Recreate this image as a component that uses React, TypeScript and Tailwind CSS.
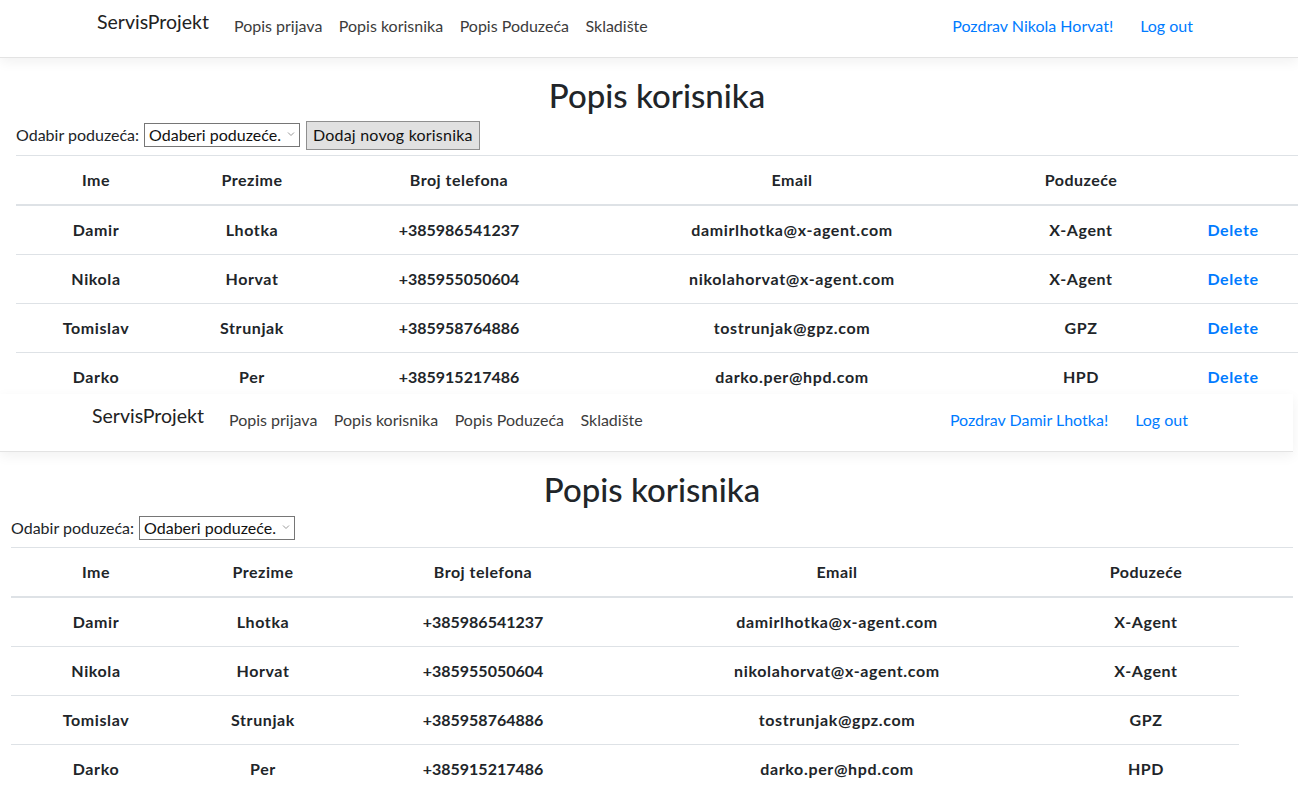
const users = [
  { ime: "Damir", prezime: "Lhotka", tel: "+385986541237", email: "damirlhotka@x-agent.com", firma: "X-Agent" },
  { ime: "Nikola", prezime: "Horvat", tel: "+385955050604", email: "nikolahorvat@x-agent.com", firma: "X-Agent" },
  { ime: "Tomislav", prezime: "Strunjak", tel: "+385958764886", email: "tostrunjak@gpz.com", firma: "GPZ" },
  { ime: "Darko", prezime: "Per", tel: "+385915217486", email: "darko.per@hpd.com", firma: "HPD" },
];

const cell = "border-t border-[#dee2e6] px-3 py-3 text-center leading-[24px]";

const Navbar = ({ user, left }: { user: string; left: string }) => {
  return (
    <nav className={`flex h-[58px] items-start border-b border-[#e3e3e3] bg-white pr-[105px] shadow-[0_4px_12px_rgba(0,0,0,0.06)] ${left}`}>
      <span className="pt-[7px] text-[19.5px] leading-[30px] text-[#222]">ServisProjekt</span>
      <ul className="ml-[25px] flex gap-[16.5px] pt-[14px] leading-[24px] text-[#3c3c3c]">
        <li>Popis prijava</li>
        <li>Popis korisnika</li>
        <li>Popis Poduzeća</li>
        <li>Skladište</li>
      </ul>
      <ul className="ml-auto flex gap-[27px] pt-[14px] leading-[24px] text-[#007bff]">
        <li>Pozdrav {user}!</li>
        <li>Log out</li>
      </ul>
    </nav>
  );
};

const Select = () => {
  return (
    <div className="relative">
      <select className="h-[24px] w-[156px] appearance-none border border-[#767676] bg-white pl-[4px] pr-[14px] text-[16px] leading-[20px] text-[#111]">
        <option>Odaberi poduzeće.</option>
      </select>
      <svg className="pointer-events-none absolute right-[5px] top-[8px]" width="8" height="6" viewBox="0 0 8 6">
        <path d="M1 1.5 L4 4.5 L7 1.5" fill="none" stroke="#9a9a9a" strokeWidth="1" />
      </svg>
    </div>
  );
};

const Page = ({ user, withDelete, cols, pad, navLeft, width }: {
  user: string;
  withDelete: boolean;
  cols: string[];
  pad: string;
  navLeft: string;
  width: string;
}) => {
  return (
    <div className={width}>
      <Navbar user={user} left={navLeft} />
      <div className={pad}>
        <h2 className="mt-[18px] h-[39px] text-center text-[33px] font-medium leading-[39px] text-[#212529]">
          Popis korisnika
        </h2>
        <div className={`mt-[5px] flex items-center gap-[5px] ${withDelete ? "h-[30px]" : "h-[28px]"}`}>
          <span>Odabir poduzeća:</span>
          <Select />
          {withDelete && (
            <button className="ml-[1px] h-[29px] border border-[#8f8f8f] bg-[#e1e1e1] px-[6px] text-[16px] tracking-[0.2px] text-[#111]">
              Dodaj novog korisnika
            </button>
          )}
        </div>
        <table className="mt-[5px] w-full table-fixed border-collapse font-bold">
          <thead>
            <tr>
              {["Ime", "Prezime", "Broj telefona", "Email", "Poduzeće", ""].map((h, i) => (
                <th key={i} className={`${cols[i]} border-t border-b-2 border-[#dee2e6] px-3 py-3 text-center leading-[24px] tracking-[0.5px]`}>
                  {h}
                </th>
              ))}
            </tr>
          </thead>
          <tbody>
            {users.map((u) => (
              <tr key={u.email}>
                <td className={`${cell} tracking-[0.6px]`}>{u.ime}</td>
                <td className={`${cell} tracking-[0.6px]`}>{u.prezime}</td>
                <td className={cell}>{u.tel}</td>
                <td className={`${cell} tracking-[0.65px]`}>{u.email}</td>
                <td className={`${cell} tracking-[0.6px]`}>{u.firma}</td>
                {withDelete && (
                  <td className={`${cell} tracking-[0.6px] text-[#007bff]`}>Delete</td>
                )}
              </tr>
            ))}
          </tbody>
        </table>
      </div>
    </div>
  );
};

export default function App() {
  return (
    <div className="h-[799px] w-[1298px] overflow-hidden bg-white font-['Lato',sans-serif] text-[16px] text-[#212529]">
      <div className="h-[394px] overflow-hidden">
        <Page
          user="Nikola Horvat"
          withDelete
          width="w-[1298px]"
          navLeft="pl-[97px]"
          pad="pl-[16px]"
          cols={["w-[160px]", "w-[152px]", "w-[262px]", "w-[404px]", "w-[174px]", "w-[130px]"]}
        />
      </div>
      <Page
        user="Damir Lhotka"
        withDelete={false}
        width="w-[1293px]"
        navLeft="pl-[92px]"
        pad="pl-[11px]"
        cols={["w-[170px]", "w-[164px]", "w-[276px]", "w-[432px]", "w-[186px]", "w-[54px]"]}
      />
    </div>
  );
}
